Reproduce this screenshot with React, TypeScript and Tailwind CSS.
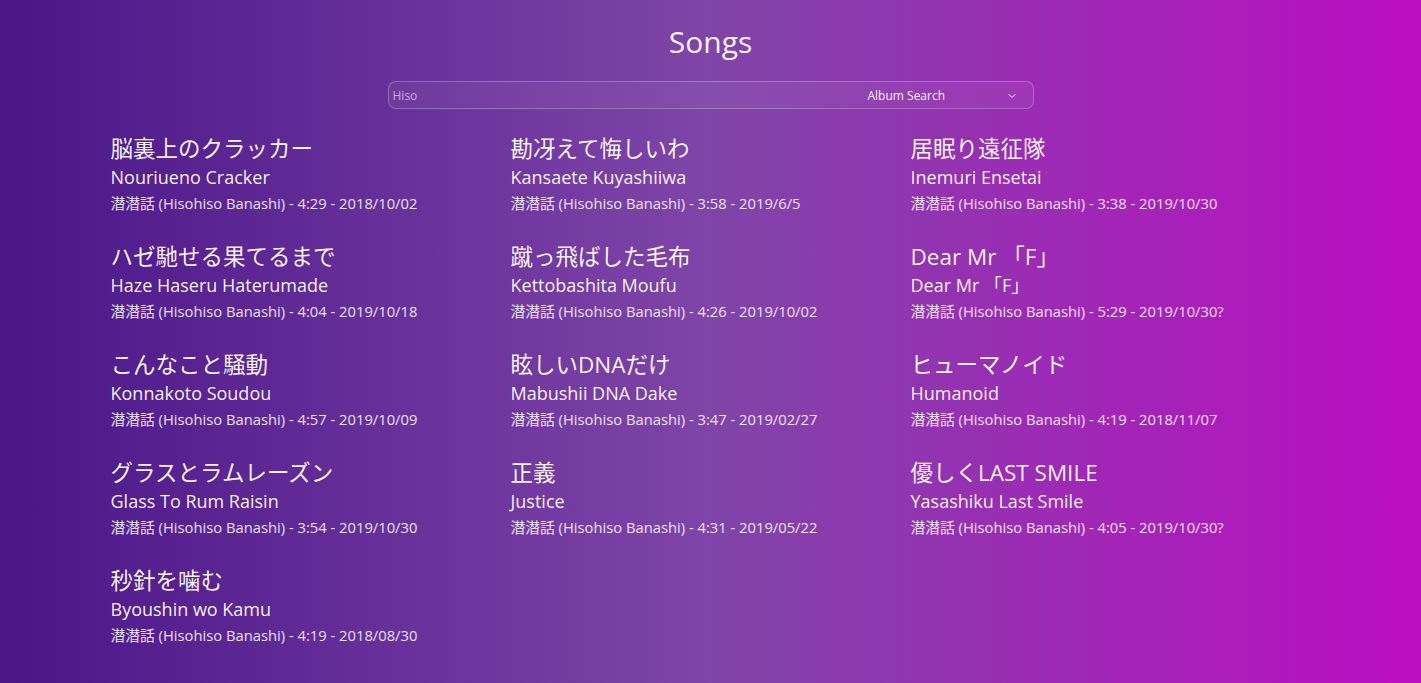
import { ChevronDown } from "lucide-react";

type Song = {
  title: string;
  romaji: string;
  length: string;
  date: string;
};

const songs: Song[] = [
  { title: "脳裏上のクラッカー", romaji: "Nouriueno Cracker", length: "4:29", date: "2018/10/02" },
  { title: "勘冴えて悔しいわ", romaji: "Kansaete Kuyashiiwa", length: "3:58", date: "2019/6/5" },
  { title: "居眠り遠征隊", romaji: "Inemuri Ensetai", length: "3:38", date: "2019/10/30" },
  { title: "ハゼ馳せる果てるまで", romaji: "Haze Haseru Haterumade", length: "4:04", date: "2019/10/18" },
  { title: "蹴っ飛ばした毛布", romaji: "Kettobashita Moufu", length: "4:26", date: "2019/10/02" },
  { title: "Dear Mr 「F」", romaji: "Dear Mr 「F」", length: "5:29", date: "2019/10/30?" },
  { title: "こんなこと騒動", romaji: "Konnakoto Soudou", length: "4:57", date: "2019/10/09" },
  { title: "眩しいDNAだけ", romaji: "Mabushii DNA Dake", length: "3:47", date: "2019/02/27" },
  { title: "ヒューマノイド", romaji: "Humanoid", length: "4:19", date: "2018/11/07" },
  { title: "グラスとラムレーズン", romaji: "Glass To Rum Raisin", length: "3:54", date: "2019/10/30" },
  { title: "正義", romaji: "Justice", length: "4:31", date: "2019/05/22" },
  { title: "優しくLAST SMILE", romaji: "Yasashiku Last Smile", length: "4:05", date: "2019/10/30?" },
  { title: "秒針を噛む", romaji: "Byoushin wo Kamu", length: "4:19", date: "2018/08/30" }
];

function SongItem({ song }: { song: Song }) {
  return (
    <div>
      <p className="text-[22.5px] leading-7 text-white/95">{song.title}</p>
      <p className="mt-0.5 text-lg leading-6 text-white/95">{song.romaji}</p>
      <p className="mt-1 text-[14.75px] leading-5 text-white/85">
        潜潜話 (Hisohiso Banashi) - {song.length} - {song.date}
      </p>
    </div>
  );
}

export default function App() {
  return (
    <div className="min-h-[683px] w-full bg-[linear-gradient(to_right,#4a1688_0%,#7f45a8_50%,#bc0ec2_100%)] pt-6 font-['Open_Sans','Noto_Sans_CJK_JP',sans-serif]">
      <h1 className="text-center text-3xl leading-9 text-white/95">Songs</h1>
      <div className="mx-auto mt-[21px] flex h-7 w-[646px] items-center rounded-lg border border-white/25 bg-white/5 pl-1 pr-[15px] pt-px text-xs">
        <span className="flex-1 text-white/60">Hiso</span>
        <span className="w-[138px] text-white/95">Album Search</span>
        <ChevronDown className="h-3 w-3 text-white/90" strokeWidth={2} />
      </div>
      <div className="mx-auto mt-[26px] grid w-[1200px] grid-cols-3 gap-y-[30px] pb-8">
        {songs.map((song) => (
          <SongItem key={song.title} song={song} />
        ))}
      </div>
    </div>
  );
}
